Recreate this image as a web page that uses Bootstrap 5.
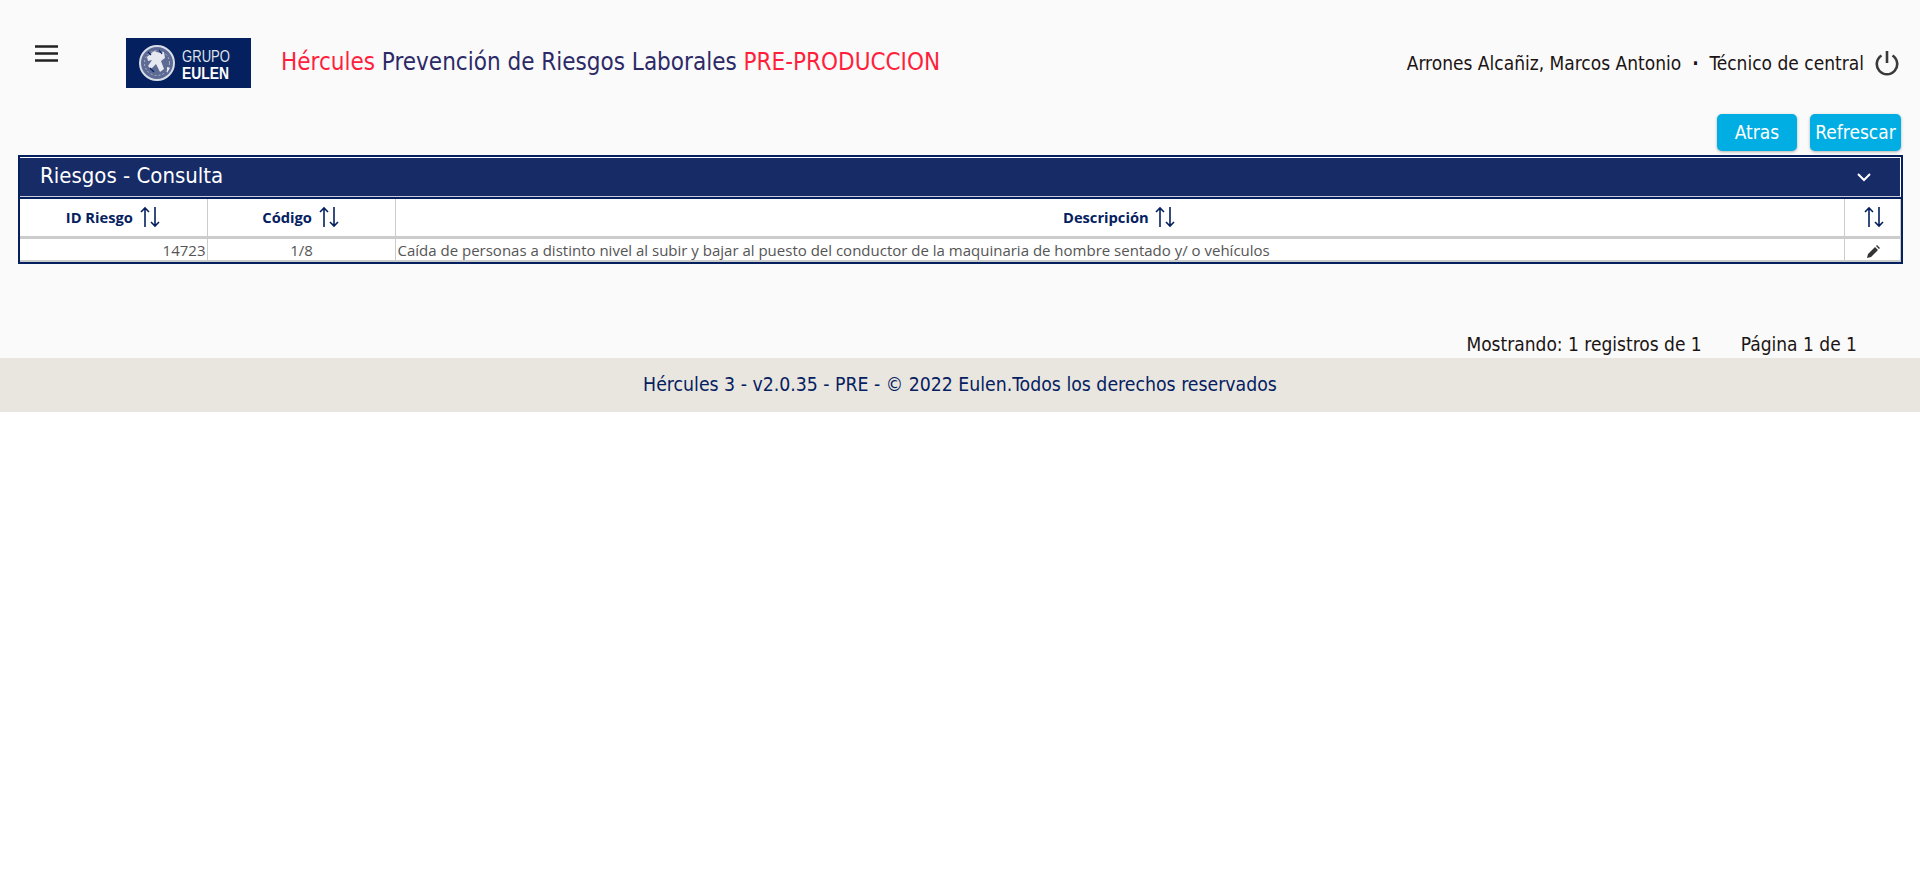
<!DOCTYPE html>
<html lang="es">
<head>
    <meta charset="UTF-8">
    <meta name="viewport" content="width=device-width, initial-scale=1.0">
    <title>Riesgos - Consulta</title>
    <link href="https://cdn.jsdelivr.net/npm/bootstrap@5.3.0/dist/css/bootstrap.min.css" rel="stylesheet">
    <style>
        body { background-color: #fff; font-family: "DejaVu Sans Condensed", "DejaVu Sans", sans-serif; }
        .app-page { background-color: #fafafa; height: 358px; }
        .app-head { height: 114px; padding-left: 34px; padding-right: 21px; padding-top: 12px; }
        .menu-btn { width: 25px; margin-bottom: 20px; border: 0; background: none; padding: 0; line-height: 0; }
        .logo-box { width: 125px; height: 50px; margin-left: 67px; background-color: #05205f; }
        .app-title { margin-left: 30px; margin-bottom: 3px; font-size: 24px; color: #2c2a66; }
        .app-title em { font-style: normal; color: #ff1f3d; }
        .user-info { font-size: 19px; color: #1a1414; }
        .user-sep { font-weight: 700; }
        .power-btn { margin-left: 11px; line-height: 0; }
        .btn-row { height: 41px; padding-right: 19px; }
        .btn-eulen { background-color: #00aee3; color: #fff; border: 0; border-radius: 5px; height: 37px; padding: 0; font-size: 19px; box-shadow: 0 1px 3px rgba(0,0,0,.3); }
        .btn-eulen:hover { background-color: #00aee3; color: #fff; }
        .btn-back { width: 80px; margin-right: 13px; }
        .btn-refresh { width: 91px; }
        .panel-box { margin: 0 17px 0 18px; border: 2px solid #05205f; background: #fff; }
        .panel-head { height: 40px; background-color: #172b66; color: #fff; font-size: 22px; padding: 0 28px 0 20px; border-top: 1px solid #fff; border-right: 1px solid #fff; border-bottom: 1px solid #ccd; margin-bottom: 2px; box-shadow: 0 2px 0 #05205f; }
        .panel-title { margin-bottom: 4px; }
        .grid-table { table-layout: fixed; width: 100%; margin: 0; border-collapse: collapse; font-family: "Open Sans", sans-serif; }
        .grid-table th { height: 38px; padding: 0; text-align: center; color: #05205f; font-size: 14.7px; font-weight: 700; border-right: 1px solid #ccc; border-bottom: 3px solid #ccc; vertical-align: middle; }
        .grid-table td { height: 24px; padding: 1px 1px 0 2px; color: #555; font-size: 15px; line-height: 20px; border-right: 1px solid #ccc; border-bottom: 2px solid #ccc; vertical-align: middle; }
        .col-id { width: 187px; }
        .col-code { width: 188px; }
        .col-edit { width: 56px; }
        .sort-ico { margin-left: 2px; vertical-align: -5px; }
        .page-info { height: 36px; margin-top: 62px; padding-right: 63px; font-size: 19px; color: #1a1414; }
        .page-info span + span { margin-left: 39px; }
        .app-foot { height: 54px; background-color: #e9e6df; color: #05205f; font-size: 19.3px; }
    </style>
</head>
<body>

    <div class="app-page">
        <!-- header -->
        <header class="app-head d-flex align-items-center">
            <button class="menu-btn" type="button" aria-label="Menu">
                <svg width="25" height="17" viewBox="0 0 25 17"><path d="M1 1.5h23M1 8.5h23M1 15.5h23" stroke="#222" stroke-width="2.4" fill="none"/></svg>
            </button>
            <div class="logo-box d-flex align-items-center justify-content-center">
                <svg width="125" height="50" viewBox="0 0 125 50">
                    <circle cx="31" cy="25" r="17" fill="#5d6b94" stroke="#d8dde8" stroke-width="2"/>
                    <circle cx="31" cy="25" r="12.5" fill="none" stroke="#aab3ca" stroke-width="1" stroke-dasharray="2 2"/>
                    <path d="M21 19l7-6 6 2 4-1 1 6-4 3 3 8-4 3-4-8-5 5-3-3 4-6-4 1zM41 29l3 1-3 5z" fill="#e6e9f0"/>
                    <path d="M24 30l4 4M33 12l3 4M22 14l3 3" stroke="#05205f" stroke-width="1.2"/>
                    <text x="56" y="24" fill="#dfe3ec" font-family="Liberation Sans" font-size="17" textLength="48" lengthAdjust="spacingAndGlyphs">GRUPO</text>
                    <text x="56" y="41" fill="#fff" font-family="Liberation Sans" font-weight="700" font-size="17" textLength="47" lengthAdjust="spacingAndGlyphs">EULEN</text>
                </svg>
            </div>
            <div class="app-title"><em>Hércules</em> Prevención de Riesgos Laborales <em>PRE-PRODUCCION</em></div>
            <div class="ms-auto d-flex align-items-center">
                <div class="user-info">Arrones Alcañiz, Marcos Antonio &nbsp;<span class="user-sep">·</span>&nbsp; Técnico de central</div>
                <div class="power-btn">
                    <svg width="24" height="26" viewBox="0 0 24 26"><path d="M12 1v12M6.5 5.5a10.2 10.2 0 1 0 11 0" stroke="#3a3a3a" stroke-width="2.6" fill="none"/></svg>
                </div>
            </div>
        </header>

        <div class="btn-row d-flex justify-content-end">
            <button class="btn btn-eulen btn-back" type="button">Atras</button>
            <button class="btn btn-eulen btn-refresh" type="button">Refrescar</button>
        </div>

        <!-- panel -->
        <div class="panel-box">
            <div class="panel-head d-flex align-items-center justify-content-between">
                <span class="panel-title">Riesgos - Consulta</span>
                <svg width="16" height="10" viewBox="0 0 16 10"><path d="M2 2l6 6 6-6" stroke="#fff" stroke-width="2" fill="none"/></svg>
            </div>
            <table class="grid-table">
                <thead>
                    <tr>
                        <th class="col-id">ID Riesgo <svg class="sort-ico" width="22" height="22" viewBox="0 0 22 22"><path d="M6 21V2M2 6l4-4 4 4M16 1v19M12 16l4 4 4-4" stroke="#05205f" stroke-width="1.6" fill="none"/></svg></th>
                        <th class="col-code">Código <svg class="sort-ico" width="22" height="22" viewBox="0 0 22 22"><path d="M6 21V2M2 6l4-4 4 4M16 1v19M12 16l4 4 4-4" stroke="#05205f" stroke-width="1.6" fill="none"/></svg></th>
                        <th>Descripción <svg class="sort-ico" width="22" height="22" viewBox="0 0 22 22"><path d="M6 21V2M2 6l4-4 4 4M16 1v19M12 16l4 4 4-4" stroke="#05205f" stroke-width="1.6" fill="none"/></svg></th>
                        <th class="col-edit"><svg class="sort-ico" width="22" height="22" viewBox="0 0 22 22"><path d="M6 21V2M2 6l4-4 4 4M16 1v19M12 16l4 4 4-4" stroke="#05205f" stroke-width="1.6" fill="none"/></svg></th>
                    </tr>
                </thead>
                <tbody>
                    <tr>
                        <td class="text-end">14723</td>
                        <td class="text-center">1/8</td>
                        <td>Caída de personas a distinto nivel al subir y bajar al puesto del conductor de la maquinaria de hombre sentado y/ o vehículos</td>
                        <td class="text-center"><svg width="13" height="13" viewBox="0 0 13 13"><path d="M0 13l1-4 7-7 3 3-7 7zM9 1l1-1 3 3-1 1z" fill="#333"/></svg></td>
                    </tr>
                </tbody>
            </table>
        </div>

        <div class="page-info d-flex justify-content-end align-items-center">
            <span>Mostrando: 1 registros de 1</span>
            <span>Página 1 de 1</span>
        </div>
    </div>

    <footer class="app-foot d-flex align-items-center justify-content-center">Hércules 3 - v2.0.35 - PRE - © 2022 Eulen.Todos los derechos reservados</footer>

    <script src="https://cdn.jsdelivr.net/npm/bootstrap@5.3.0/dist/js/bootstrap.bundle.min.js"></script>
</body>
</html>
